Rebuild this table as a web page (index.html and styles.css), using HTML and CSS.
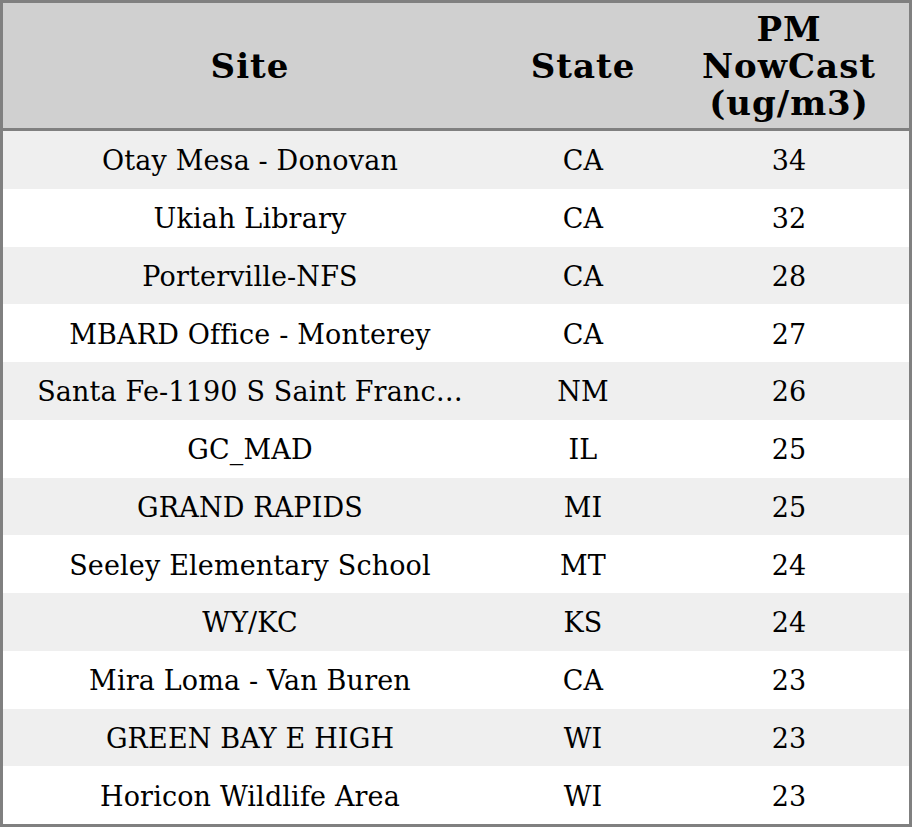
FILE: index.html
```html
<!DOCTYPE html>
<html>
<head>
<meta charset="utf-8">
<link rel="stylesheet" href="styles.css">
</head>
<body>
<table class="aq">
  <colgroup>
    <col class="c-site"><col class="c-state"><col class="c-pm">
  </colgroup>
  <thead>
    <tr><th>Site</th><th>State</th><th>PM<br>NowCast<br>(ug/m3)</th></tr>
  </thead>
  <tbody>
    <tr><td>Otay Mesa - Donovan</td><td>CA</td><td>34</td></tr>
    <tr><td>Ukiah Library</td><td>CA</td><td>32</td></tr>
    <tr><td>Porterville-NFS</td><td>CA</td><td>28</td></tr>
    <tr><td>MBARD Office - Monterey</td><td>CA</td><td>27</td></tr>
    <tr><td>Santa Fe-1190 S Saint Franc…</td><td>NM</td><td>26</td></tr>
    <tr><td>GC_MAD</td><td>IL</td><td>25</td></tr>
    <tr><td>GRAND RAPIDS</td><td>MI</td><td>25</td></tr>
    <tr><td>Seeley Elementary School</td><td>MT</td><td>24</td></tr>
    <tr><td>WY/KC</td><td>KS</td><td>24</td></tr>
    <tr><td>Mira Loma - Van Buren</td><td>CA</td><td>23</td></tr>
    <tr><td>GREEN BAY E HIGH</td><td>WI</td><td>23</td></tr>
    <tr><td>Horicon Wildlife Area</td><td>WI</td><td>23</td></tr>
  </tbody>
</table>
</body>
</html>
```
FILE: styles.css
```css
html, body {
  margin: 0;
  padding: 0;
  background: #ffffff;
}
.aq {
  width: 912px;
  border-collapse: separate;
  border-spacing: 0;
  border: 3px solid #808080;
  table-layout: fixed;
  font-family: "DejaVu Serif", serif;
  color: #000;
}
.c-site { width: 494px; }
.c-state { width: 172px; }
.c-pm { width: 240px; }
.aq th {
  background: #d0d0d0;
  height: 123px;
  padding: 2px 0 0;
  font-size: 34px;
  font-weight: bold;
  line-height: 37px;
  letter-spacing: 1px;
  text-align: center;
  vertical-align: middle;
  border-bottom: 3px solid #808080;
}
.aq td {
  height: 55.75px;
  padding: 2px 0 0;
  font-size: 27px;
  letter-spacing: 0.15px;
  text-align: center;
  vertical-align: middle;
  white-space: nowrap;
}
.aq tbody tr:nth-child(odd) td { background: #efefef; }
.aq tbody tr:nth-child(even) td { background: #ffffff; }
```
